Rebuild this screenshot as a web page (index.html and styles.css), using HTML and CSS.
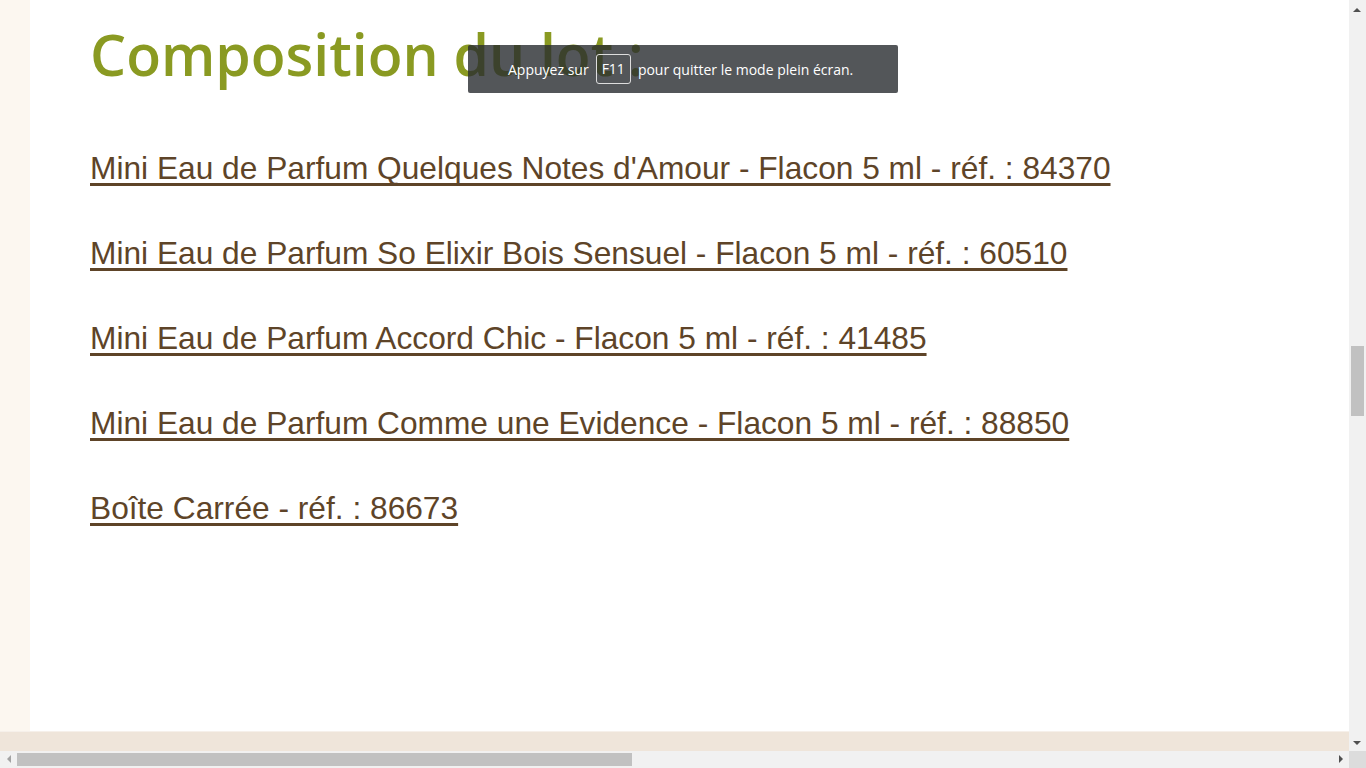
FILE: index.html
```html
<!DOCTYPE html>
<html>
<head>
    <title>Composition du lot</title>
    <link rel="stylesheet" href="styles.css">
</head>
<body>
    <div class="screen">
        <div class="page">
            <div class="page-row">
                <div class="side-strip"></div>
                <div class="content">
                    <h2 class="lot-title">Composition du lot :</h2>
                    <ul class="lot-list">
                        <li><a href="#">Mini Eau de Parfum Quelques Notes d'Amour - Flacon 5 ml - réf. : 84370</a></li>
                        <li><a href="#">Mini Eau de Parfum So Elixir Bois Sensuel - Flacon 5 ml - réf. : 60510</a></li>
                        <li><a href="#">Mini Eau de Parfum Accord Chic - Flacon 5 ml - réf. : 41485</a></li>
                        <li><a href="#">Mini Eau de Parfum Comme une Evidence - Flacon 5 ml - réf. : 88850</a></li>
                        <li><a href="#">Boîte Carrée - réf. : 86673</a></li>
                    </ul>
                </div>
            </div>
            <div class="footer-band"></div>
        </div>

        <div class="vscroll">
            <span class="arrow up"></span>
            <div class="vtrack"><div class="vthumb"></div></div>
            <span class="arrow down"></span>
        </div>
        <div class="hscroll">
            <span class="arrow left"></span>
            <div class="htrack"><div class="hthumb"></div></div>
            <span class="arrow right"></span>
        </div>
        <div class="corner"></div>

        <div class="fs-toast">
            Appuyez sur <span class="key">F11</span> pour quitter le mode plein écran.
        </div>
    </div>
</body>
</html>
```

FILE: styles.css
```css
html, body {
    margin: 0;
    padding: 0;
    height: 100%;
    overflow: hidden;
}
.screen {
    position: relative;
    display: grid;
    grid-template-columns: 1fr 17px;
    grid-template-rows: 1fr 17px;
    height: 100vh;
    background: #fff;
}
.page {
    display: flex;
    flex-direction: column;
    min-width: 0;
}
.page-row {
    flex: 1;
    display: flex;
    border-bottom: 1px solid #f6f0ea;
}
.side-strip {
    width: 30px;
    background: #fcf7f0;
}
.content {
    flex: 1;
    padding: 0 60px;
    background: #fff;
}
.lot-title {
    font-family: "Open Sans", sans-serif;
    font-weight: 600;
    font-size: 57px;
    line-height: 1;
    color: #8a9a22;
    margin: 26px 0 0;
}
.lot-list {
    list-style: none;
    margin: 67px 0 0;
    padding: 0;
}
.lot-list li {
    font-family: "Liberation Sans", Arial, sans-serif;
    font-size: 31.7px;
    line-height: 36px;
    margin-bottom: 49px;
}
.lot-list a {
    color: #5e4428;
    text-decoration: underline;
    text-decoration-thickness: 3px;
    text-underline-offset: 4px;
    text-decoration-skip-ink: none;
}
.footer-band {
    height: 19px;
    background: #efe5da;
}

/* scrollbars */
.vscroll {
    grid-column: 2;
    grid-row: 1;
    display: flex;
    flex-direction: column;
    background: #f1f1f1;
}
.vtrack {
    flex: 1;
    padding: 0 2px;
}
.vthumb {
    margin-top: 329px;
    height: 70px;
    background: #c1c1c1;
}
.hscroll {
    grid-column: 1;
    grid-row: 2;
    display: flex;
    align-items: center;
    background: #f1f1f1;
}
.htrack {
    flex: 1;
    height: 13px;
}
.hthumb {
    width: 615px;
    height: 13px;
    background: #c1c1c1;
}
.corner {
    grid-column: 2;
    grid-row: 2;
    background: #dcdcdc;
}
.arrow {
    display: block;
    width: 17px;
    height: 17px;
    position: relative;
    flex: none;
}
.arrow::after {
    content: "";
    position: absolute;
    width: 0;
    height: 0;
    border: 4px solid transparent;
}
.arrow.up::after {
    left: 4px;
    top: 4px;
    border-bottom: 4px solid #505050;
    border-left-width: 4.5px;
    border-right-width: 4.5px;
}
.arrow.down::after {
    left: 4px;
    top: 7px;
    border-top: 4px solid #505050;
    border-left-width: 4.5px;
    border-right-width: 4.5px;
}
.arrow.left::after {
    left: 3px;
    top: 4px;
    border-right: 4px solid #a3a3a3;
    border-top-width: 4.5px;
    border-bottom-width: 4.5px;
}
.arrow.right::after {
    left: 7px;
    top: 4px;
    border-left: 4px solid #505050;
    border-top-width: 4.5px;
    border-bottom-width: 4.5px;
}

/* fullscreen notice */
.fs-toast {
    position: absolute;
    left: 468px;
    top: 45px;
    width: 430px;
    height: 48px;
    box-sizing: border-box;
    padding-left: 40px;
    display: flex;
    align-items: center;
    gap: 7px;
    background: rgba(40, 44, 48, 0.8);
    border-radius: 2px;
    color: #fff;
    font-family: "Open Sans", sans-serif;
    font-size: 14px;
}
.key {
    display: inline-block;
    border: 1px solid #ddd;
    border-radius: 3px;
    padding: 6px 5px;
    line-height: 16px;
}
```
